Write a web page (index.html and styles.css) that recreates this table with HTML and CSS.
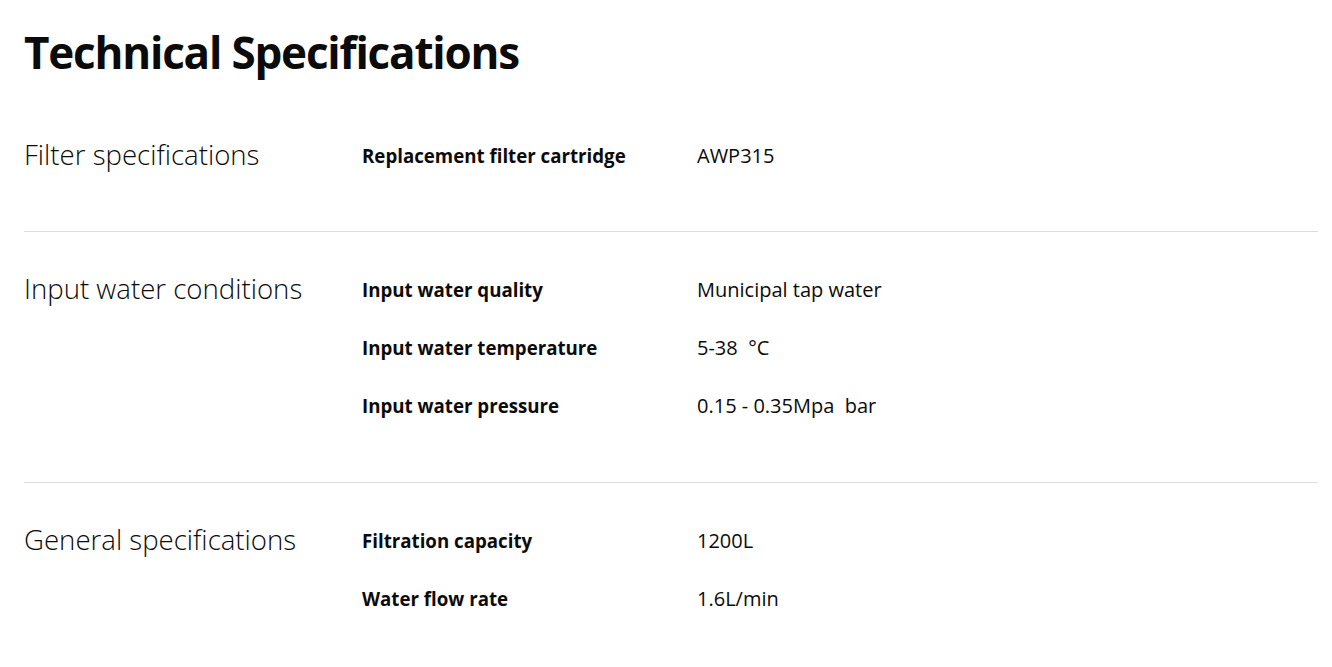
FILE: index.html
```html
<!DOCTYPE html>
<html lang="en">
<head>
<meta charset="utf-8">
<title>Technical Specifications</title>
<link rel="stylesheet" href="styles.css">
</head>
<body>
<main class="specs">
  <h1 class="specs-title">Technical Specifications</h1>

  <section class="spec-group first">
    <h2 class="group-name">Filter specifications</h2>
    <dl class="group-rows">
      <div class="row"><dt>Replacement filter cartridge</dt><dd>AWP315</dd></div>
    </dl>
  </section>

  <section class="spec-group">
    <h2 class="group-name">Input water conditions</h2>
    <dl class="group-rows">
      <div class="row"><dt>Input water quality</dt><dd>Municipal tap water</dd></div>
      <div class="row"><dt>Input water temperature</dt><dd>5-38 &nbsp;°C</dd></div>
      <div class="row"><dt>Input water pressure</dt><dd>0.15 - 0.35Mpa &nbsp;bar</dd></div>
    </dl>
  </section>

  <section class="spec-group last">
    <h2 class="group-name">General specifications</h2>
    <dl class="group-rows">
      <div class="row"><dt>Filtration capacity</dt><dd>1200L</dd></div>
      <div class="row"><dt>Water flow rate</dt><dd>1.6L/min</dd></div>
    </dl>
  </section>
</main>
</body>
</html>
```
FILE: styles.css
```css
html, body {
  margin: 0;
  padding: 0;
  background: #fff;
}
body {
  font-family: "Open Sans", "Noto Sans", sans-serif;
  color: #0b0b0b;
}
.specs {
  padding: 0 14px 0 24px;
}
.specs-title {
  font-size: 44px;
  font-weight: 700;
  line-height: 60px;
  margin: 22px 0 0;
  letter-spacing: -1.2px;
}
.spec-group {
  display: grid;
  grid-template-columns: 338px 1fr;
  padding: 28px 0 48px;
  border-bottom: 1px solid #dcdcdc;
}
.spec-group.first {
  padding-top: 44px;
  padding-bottom: 47px;
}
.spec-group.first .group-name {
  padding-top: 11px;
}
.spec-group.last {
  border-bottom: none;
}
.group-name {
  margin: 0;
  font-size: 27.6px;
  font-weight: 300;
  line-height: 34px;
  padding-top: 11px;
}
.group-rows {
  margin: 0;
}
.row {
  display: grid;
  grid-template-columns: 335px 1fr;
  height: 58px;
  align-items: center;
}
.row dt {
  font-size: 18.7px;
  font-weight: 700;
}
.row dd {
  margin: 0;
  font-size: 20px;
  font-weight: 400;
}
```
